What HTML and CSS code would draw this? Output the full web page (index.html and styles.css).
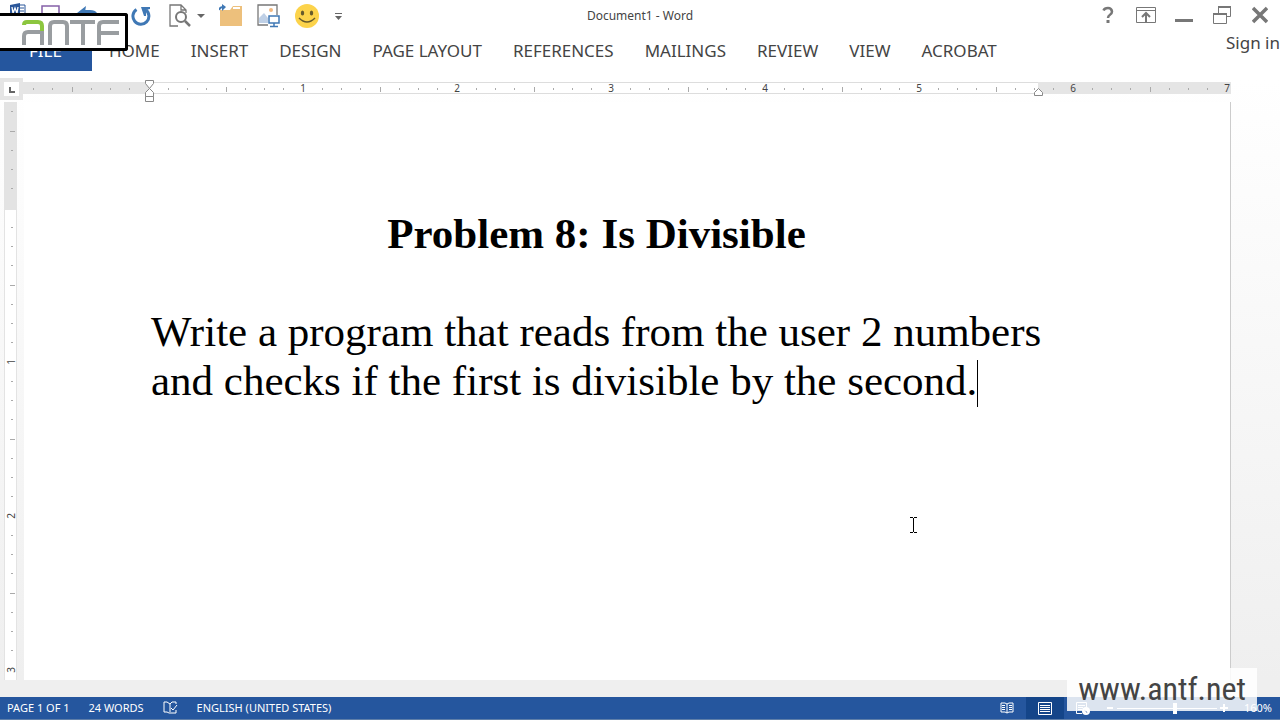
FILE: index.html
```html
<!DOCTYPE html>
<html lang="en">
<head>
    <meta charset="UTF-8"/>
    <title>Document1 - Word</title>
    <link rel="stylesheet" href="styles.css">
</head>
<body>
<header class="titlebar">
    <div class="quick">
        <button class="qbtn q-word" aria-label="Word"><svg width="18" height="26"><path d="M8 2h7v18H8z" fill="#fff" stroke="#2b579a"/><path d="M10 5h4M10 8h4M10 11h4" stroke="#2b579a"/><path d="M0 2l10-2v22L0 20z" fill="#2b579a"/><path d="M2 4l1 6L5 5l2 5L8 4" fill="none" stroke="#fff" stroke-width="1.3"/></svg></button>
        <button class="qbtn q-save" aria-label="Save"><svg width="20" height="22"><path d="M1 1h17v18H1z" fill="#fff" stroke="#8560a8" stroke-width="1.500"/><path d="M5 12h9v7H5z" fill="#8560a8"/></svg></button>
        <button class="qbtn q-undo" aria-label="Undo"><svg width="38" height="20"><path d="M5 6h8q8 0 6 9" fill="none" stroke="#3f78b5" stroke-width="4"/><path d="M0 7l9-7-1 6 3 6z" fill="#3f78b5"/><path d="M31 7h7l-3.500 4z" fill="#666"/></svg></button>
        <button class="qbtn q-redo" aria-label="Repeat"><svg width="20" height="20"><path d="M5.500 3.500A8 8 0 1 0 15 4" fill="none" stroke="#3f78b5" stroke-width="3"/><path d="M10 1h9v2l-4 1v6h-2z" fill="#3f78b5"/></svg></button>
        <button class="qbtn q-preview" aria-label="Print preview"><svg width="36" height="24"><path d="M9 22H1V1h11l5 5v3M12 1v5h5" fill="none" stroke="#777" stroke-width="1.300"/><circle cx="12" cy="13" r="5" fill="#fff" stroke="#777" stroke-width="2"/><path d="M16 17l5 5" stroke="#777" stroke-width="2.500"/><path d="M28 10h8l-4 4z" fill="#666"/></svg></button>
        <button class="qbtn q-open" aria-label="Open"><svg width="24" height="24"><path d="M1 6h10l3-4h9v20H1z" fill="#edc07c"/><path d="M14 4h7" stroke="#fff" stroke-width="2"/><path d="M0 6q1-3 4-3" fill="none" stroke="#3f78b5" stroke-width="2"/><path d="M3 0l4 3-4 4z" fill="#3f78b5"/></svg></button>
        <button class="qbtn q-picture" aria-label="Picture"><svg width="24" height="24"><path d="M11 21H1V1h19v10" fill="none" stroke="#777" stroke-width="1.300"/><circle cx="14" cy="6" r="2" fill="#f2b880"/><path d="M2 19v-5l5-5 4 5v5z" fill="#bfd0e6"/><path d="M12 12h10v7H12z" fill="#fff" stroke="#3f78b5" stroke-width="1.500"/><path d="M17 19v3M13 22.500h8" stroke="#3f78b5" stroke-width="1.500"/></svg></button>
        <button class="qbtn q-smile" aria-label="Smile"><svg width="24" height="24"><circle cx="12" cy="12" r="12" fill="#fcd34b"/><ellipse cx="7.500" cy="9" rx="1.700" ry="2.500" fill="#665a2c"/><ellipse cx="16.500" cy="9" rx="1.700" ry="2.500" fill="#665a2c"/><path d="M4 14q8 8 16 0" fill="none" stroke="#665a2c" stroke-width="1.500"/></svg></button>
        <button class="qbtn" aria-label="Customize"><svg width="8" height="8"><path d="M0 1.500h7" stroke="#666"/><path d="M0 4h7L3.500 8z" fill="#666"/></svg></button>
    </div>
    <div class="caption">Document1 - Word</div>
    <div class="window">
        <button aria-label="Help"><svg width="12" height="18"><path d="M1.500 4.500Q2.500 2 6 2t4 3.500q0 2-2 3.200T6 12" fill="none" stroke="#777" stroke-width="2.500"/><path d="M4.500 14h3v3h-3z" fill="#777"/></svg></button>
        <button aria-label="Ribbon options"><svg width="20" height="18"><path d="M.5 1.500h19v15H.5zM.5 4.500h19" fill="none" stroke="#777"/><path d="M10 16V7M6 11l4-4 4 4" fill="none" stroke="#777" stroke-width="2"/></svg></button>
        <button aria-label="Minimize"><svg width="18" height="18"><path d="M0 14.500h18" stroke="#777" stroke-width="3"/></svg></button>
        <button aria-label="Restore"><svg width="18" height="18"><path d="M5.500 7V.5h12v10h-4" fill="none" stroke="#777"/><path d="M5 1h13" stroke="#777" stroke-width="2"/><path d="M.5 7.500h13v10H.5z" fill="#fff" stroke="#777"/><path d="M0 8h14" stroke="#777" stroke-width="2"/></svg></button>
        <button aria-label="Close"><svg width="16" height="18"><path d="M1 2l14 14M15 2L1 16" stroke="#777" stroke-width="3.500"/></svg></button>
    </div>
</header>
<nav class="tabs">
    <a class="file" href="#">FILE</a>
    <a href="#">HOME</a>
    <a href="#">INSERT</a>
    <a href="#">DESIGN</a>
    <a href="#">PAGE LAYOUT</a>
    <a href="#">REFERENCES</a>
    <a href="#">MAILINGS</a>
    <a href="#">REVIEW</a>
    <a href="#">VIEW</a>
    <a href="#">ACROBAT</a>
    <a class="signin" href="#">Sign in</a>
</nav>
<div class="ruler-row">
    <button class="corner" aria-label="Left tab"><svg width="15" height="14"><path d="M6 5v5h5" fill="none" stroke="#666" stroke-width="2"/></svg></button>
    <svg class="hruler" height="24">
        <defs>
            <pattern id="hticks" x="126" y="0" width="154" height="24" patternUnits="userSpaceOnUse">
                <path d="M19.500 10v2M38.500 10v2M57.500 10v2M96.500 10v2M115.500 10v2M134.500 10v2M77.500 9v5" stroke="#aaa"/>
            </pattern>
        </defs>
        <rect y="4" width="100%" height="12" fill="#e5e5e5"/>
        <rect x="126" y="4" width="889" height="12" fill="#fff"/>
        <path d="M126 4.500h889M126 15.500h889" stroke="#ddd"/>
        <rect width="100%" height="24" fill="url(#hticks)"/>
        <g class="nums"><text x="280" y="14">1</text><text x="434" y="14">2</text><text x="588" y="14">3</text><text x="742" y="14">4</text><text x="896" y="14">5</text><text x="1050" y="14">6</text><text x="1204" y="14">7</text></g>
        <path d="M122.500 2.500h8v3l-4 5-4-5zM126.500 10.500l4 4v4h-8v-4zM122.500 18.500h8v5h-8z" fill="#fff" stroke="#888"/>
        <path d="M1015.500 10.500l4 4v3h-8v-3z" fill="#fff" stroke="#888"/>
    </svg>
</div>
<main class="work">
    <svg class="vruler" width="13">
        <defs>
            <pattern id="vticks" x="0" y="106" width="13" height="154" patternUnits="userSpaceOnUse">
                <path d="M7 19.500h2M7 38.500h2M7 57.500h2M7 96.500h2M7 115.500h2M7 134.500h2M6 77.500h5" stroke="#aaa"/>
            </pattern>
        </defs>
        <rect width="13" height="100%" fill="#e3e3e3"/>
        <rect x="1" y="108" width="11" height="100%" fill="#fff"/>
        <rect width="13" height="100%" fill="url(#vticks)"/>
        <g class="nums"><text transform="translate(11 260) rotate(-90)">1</text><text transform="translate(11 414) rotate(-90)">2</text><text transform="translate(11 568) rotate(-90)">3</text></g>
    </svg>
    <article class="page">
        <h1>Problem 8: Is Divisible</h1>
        <p>Write a program that reads from the user 2 numbers and checks if the first is divisible by the second.<span class="caret"></span></p>
    </article>
</main>
<footer class="status">
    <span>PAGE 1 OF 1</span>
    <span>24 WORDS</span>
    <button aria-label="Proofing"><svg width="15" height="14"><path d="M6 12l-2-1H1V1h3l3 2v10M7 3l2-2h4v2M14 4l-4 5-2-2M8 12h5v-3" fill="none" stroke="#fff"/></svg></button>
    <span>ENGLISH (UNITED STATES)</span>
    <div class="views">
        <button aria-label="Read mode"><svg width="14" height="12"><path d="M7 2L5 1H1v9h4l2 1 2-1h4V1H9L7 2v9M2 3.500h3M2 5.500h3M2 7.500h3M9 3.500h3M9 5.500h3M9 7.500h3" fill="none" stroke="#fff"/></svg></button>
        <button class="on" aria-label="Print layout"><svg width="14" height="13"><path d="M.5.5h13v12H.5zM2 3.500h10M2 5.500h10M2 7.500h10M2 9.500h10" fill="none" stroke="#fff"/></svg></button>
        <button aria-label="Web layout"><svg width="14" height="13"><path d="M6 11.500H.5v-11h10V5M2 3.500h7M2 5.500h5M2 7.500h4" fill="none" stroke="#fff"/><circle cx="10" cy="9" r="4" fill="#fff"/><path d="M8 8l2 1 1 2" fill="none" stroke="#8fa6cd"/></svg></button>
    </div>
    <div class="zoombar">
        <button aria-label="Zoom out"><svg width="8" height="8"><path d="M1 4h6" stroke="#fff" stroke-width="2"/></svg></button>
        <input class="zoom" type="range" min="0" max="100" value="58" aria-label="Zoom">
        <button aria-label="Zoom in"><svg width="8" height="8"><path d="M0 4h8M4 0v8" stroke="#fff" stroke-width="2"/></svg></button>
    </div>
    <span>160%</span>
</footer>
<div class="logo" role="img" aria-label="ANTF">
    <svg width="100" height="28">
        <g fill="none" stroke="#999da0" stroke-width="4">
            <path d="M2 26V17q0-4 4-4h14M20 12v14M28 26V7q0-4 4-4h9q4 0 4 4v19M48 3h25M61 3v23M77 26V7q0-4 4-4h16M77 14h20"/>
            <path d="M2 6q0-3 3-3h11q4 0 4 4v5" stroke="#8cc63f"/>
        </g>
    </svg>
</div>
<svg class="ibeam" width="7" height="16"><path d="M0 .5h3M4 .5h3M3.500 1v14M0 15.500h3M4 15.500h3" stroke="#000"/></svg>
<div class="watermark">www.antf.net</div>
</body>
</html>
```

FILE: styles.css
```css
* {box-sizing:border-box;}
body {background:linear-gradient(#fff 80px, #efefef 680px);color:#444;display:flex;flex-direction:column;font:12px/16px "Noto Sans", sans-serif;margin:0;min-height:100vh;overflow:hidden;position:relative;}
button {align-items:center;background:none;border:0;display:flex;justify-content:center;padding:0;}
svg {display:block;flex:none;}
a {color:inherit;text-decoration:none;}

.titlebar {display:grid;grid-template-columns:1fr auto 1fr;height:32px;}
.quick {align-items:center;display:flex;padding-left:10px;}
.q-word {margin-right:13px;}
.q-save {margin-right:16px;}
.q-undo {margin-right:16px;}
.q-redo {margin-right:18px;}
.q-preview {margin-right:14px;}
.q-open {margin-right:14px;}
.q-picture {margin-right:14px;}
.q-smile {margin-right:16px;}
.caption {align-self:center;}
.window {display:flex;justify-content:flex-end;padding-right:1px;}
.window button {height:30px;width:38px;}

.tabs {display:flex;font-size:17px;gap:31px;height:46px;line-height:38px;white-space:nowrap;}
.file {background:#25569e;color:#fff;height:39px;margin-right:-14px;padding:0 30px 0 29px;}
.signin {line-height:22px;margin-left:auto;}

.ruler-row {display:flex;height:24px;}
.corner {background:#e5e5e5;height:22px;width:23px;}
.corner svg {background:#fff;}
.hruler {flex:1;margin-right:49px;}
.nums {fill:#444;font-size:10px;text-anchor:middle;}

.work {display:flex;flex:1;padding:0 49px 0 4px;}
.vruler {height:auto;}
.page {background:#fff;border-right:1px solid #ccc;color:#000;flex:1;font:43px/49px "Liberation Serif", serif;margin-left:7px;padding:107px 188px 0 127px;}
.page h1 {font-size:43px;margin:0;text-align:center;}
.page p {margin:49px 0 0;}
.caret {border-left:1px solid;display:inline-block;height:47px;margin:-4px 0;vertical-align:-8px;}

.status {align-items:center;background:#25569e;border-bottom:1px solid #5f7fa9;color:#fff;display:flex;font-size:11px;gap:19px;height:23px;margin-top:17px;padding:0 8px 0 7px;}
.views {display:flex;margin-left:auto;}
.views button {height:22px;width:38px;}
.views .on {background:#144589;}
.zoombar {align-items:center;display:flex;gap:3px;margin:0 -3px 0 -15px;}
.zoom {appearance:none;background:linear-gradient(#fff,#fff) center/100px 1px no-repeat;height:14px;margin:0;width:100px;}
.zoom::-webkit-slider-thumb {appearance:none;background:#fff;height:11px;width:4px;}

.logo {background:#fff;border:3px solid #000;border-left:0;border-radius:0 3px 3px 0;height:38px;left:0;padding:3px 0 0 22px;position:absolute;top:13px;width:128px;}
.ibeam {left:910px;position:absolute;top:517px;}
.watermark {background:rgba(255,255,255,.84);bottom:9px;font:32px/43px "Roboto Condensed", "Open Sans Condensed", Roboto, sans-serif;padding:0 11px;position:absolute;right:23px;}
```
